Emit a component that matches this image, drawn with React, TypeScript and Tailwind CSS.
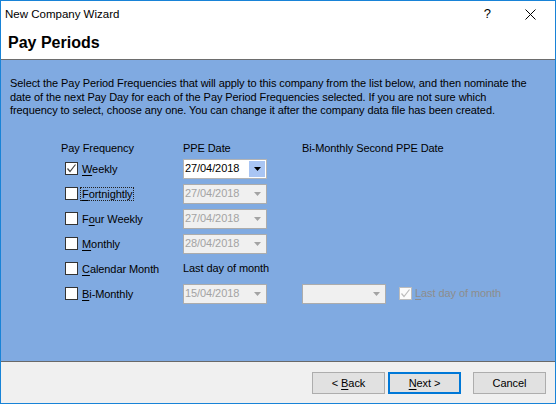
import React from "react";

type Row = {
  key: string;
  pre?: string;
  hot: string;
  post: string;
  checked?: boolean;
  focused?: boolean;
  date?: string;
  dateEnabled?: boolean;
  note?: string;
  extra?: boolean;
};

const rows: Row[] = [
  { key: "weekly", hot: "W", post: "eekly", checked: true, date: "27/04/2018", dateEnabled: true },
  { key: "fortnightly", hot: "F", post: "ortnightly", focused: true, date: "27/04/2018" },
  { key: "four", pre: "F", hot: "o", post: "ur Weekly", date: "27/04/2018" },
  { key: "monthly", hot: "M", post: "onthly", date: "28/04/2018" },
  { key: "calendar", hot: "C", post: "alendar Month", note: "Last day of month" },
  { key: "bimonthly", hot: "B", post: "i-Monthly", date: "15/04/2018", extra: true },
];

function Arrow({ color }: { color: string }) {
  return (
    <svg width="7" height="4" viewBox="0 0 7 4">
      <path d="M0 0H7L3.5 4Z" fill={color} />
    </svg>
  );
}

function Combo({ value, enabled }: { value?: string; enabled?: boolean }) {
  if (enabled) {
    return (
      <div className="w-[84px] h-[20px] border border-[#b4b4b4] bg-white flex items-stretch">
        <div className="flex-1 pl-[1px] flex items-center text-black">{value}</div>
        <div className="w-[16px] my-[1px] mr-[1px] bg-[#a9c5f3] flex items-center justify-center">
          <Arrow color="#000" />
        </div>
      </div>
    );
  }
  return (
    <div className="w-[84px] h-[20px] border border-[#acacac] bg-[#f0f0f0] flex items-stretch">
      <div className="flex-1 pl-[1px] flex items-center text-[#a3a3a3]">{value}</div>
      <div className="w-[17px] flex items-center justify-center">
        <Arrow color="#a3a3a3" />
      </div>
    </div>
  );
}

function Check({ checked, disabled }: { checked?: boolean; disabled?: boolean }) {
  return (
    <div
      className={
        disabled
          ? "w-[13px] h-[13px] border border-[#bcbcbc] bg-[#fbfbfb] flex items-center justify-center shrink-0"
          : "w-[13px] h-[13px] border border-[#333] bg-white flex items-center justify-center shrink-0"
      }
    >
      {checked && (
        <svg width="11" height="11" viewBox="0 0 11 11">
          <path
            d="M1.5 5.5L4 8.5L9.5 1.5"
            fill="none"
            stroke={disabled ? "#bcbcbc" : "#444"}
            strokeWidth="1.2"
          />
        </svg>
      )}
    </div>
  );
}

export default function App() {
  return (
    <div className="w-[556px] h-[404px] border border-[#1883d7] bg-white flex flex-col overflow-hidden font-['Liberation_Sans',Arial,sans-serif] text-[11px] tracking-[-0.08px] text-black">
      {/* caption bar */}
      <div className="h-[29px] flex items-start pt-[5px] pl-[4px] pr-[19px]">
        <span className="text-[11.5px] leading-[16px] tracking-normal">New Company Wizard</span>
        <div className="flex-1" />
        <span className="text-[13px] leading-[16px] mr-[34px]">?</span>
        <svg width="11" height="11" viewBox="0 0 11 11" className="mt-[3px]">
          <path d="M0.5 0.5L10.5 10.5M10.5 0.5L0.5 10.5" stroke="#000" strokeWidth="1" />
        </svg>
      </div>

      {/* page heading */}
      <div className="h-[30px] border-b border-[#6d6d6d] pl-[7px] pt-[3px]">
        <h1 className="text-[16px] leading-[19px] font-bold tracking-normal">Pay Periods</h1>
      </div>

      {/* page body */}
      <div className="h-[302px] bg-[#80aae1] border-b border-[#696969] pt-[17px] pl-[9px]">
        <p className="leading-[13.5px]">
          Select the Pay Period Frequencies that will apply to this company from the list below, and then nominate the
          <br />
          date of the next Pay Day for each of the Pay Period Frequencies selected. If you are not sure which
          <br />
          frequency to select, choose any one. You can change it after the company data file has been created.
        </p>

        <div className="mt-[24px] ml-[51px] flex flex-col">
          <div className="flex h-[14px] items-center">
            <div className="w-[122px]">Pay Frequency</div>
            <div className="w-[119px]">PPE Date</div>
            <div>Bi-Monthly Second PPE Date</div>
          </div>

          <div className="mt-[3px] flex flex-col gap-[5px]">
            {rows.map((r) => (
              <div key={r.key} className="flex h-[20px] items-center">
                <div className="w-[122px] pl-[4px] flex items-center">
                  <Check checked={r.checked} />
                  <span
                    className={
                      r.focused
                        ? "ml-[2px] px-[1px] border border-dotted border-[#222] leading-[12px]"
                        : "ml-[2px] px-[1px] border border-transparent leading-[12px]"
                    }
                  >
                    {r.pre}
                    <span className="underline underline-offset-[2px]">{r.hot}</span>
                    {r.post}
                  </span>
                </div>
                <div className="w-[119px] flex items-center">
                  {r.date ? <Combo value={r.date} enabled={r.dateEnabled} /> : <span>{r.note}</span>}
                </div>
                {r.extra && (
                  <>
                    <div className="w-[97px]">
                      <Combo />
                    </div>
                    <div className="flex items-center">
                      <Check checked disabled />
                      <span className="ml-[2px] px-[1px] text-[#8d8d8d]">
                        <span className="underline underline-offset-[2px]">L</span>ast day of month
                      </span>
                    </div>
                  </>
                )}
              </div>
            ))}
          </div>
        </div>
      </div>

      {/* button strip */}
      <div className="h-[41px] bg-[#f0f0f0] flex justify-end items-start pt-[10px] pr-[9px]">
        <button className="w-[73px] h-[22px] border border-[#adadad] bg-[#e1e1e1] flex items-center justify-center">
          &lt; <span className="underline underline-offset-[2px] ml-[3px]">B</span>ack
        </button>
        <button className="ml-[3px] w-[73px] h-[22px] border-2 border-[#0078d7] bg-[#e1e1e1] flex items-center justify-center">
          <span className="underline underline-offset-[2px]">N</span>ext &gt;
        </button>
        <button className="ml-[12px] w-[73px] h-[22px] border border-[#adadad] bg-[#e1e1e1] flex items-center justify-center">
          Cancel
        </button>
      </div>
    </div>
  );
}
